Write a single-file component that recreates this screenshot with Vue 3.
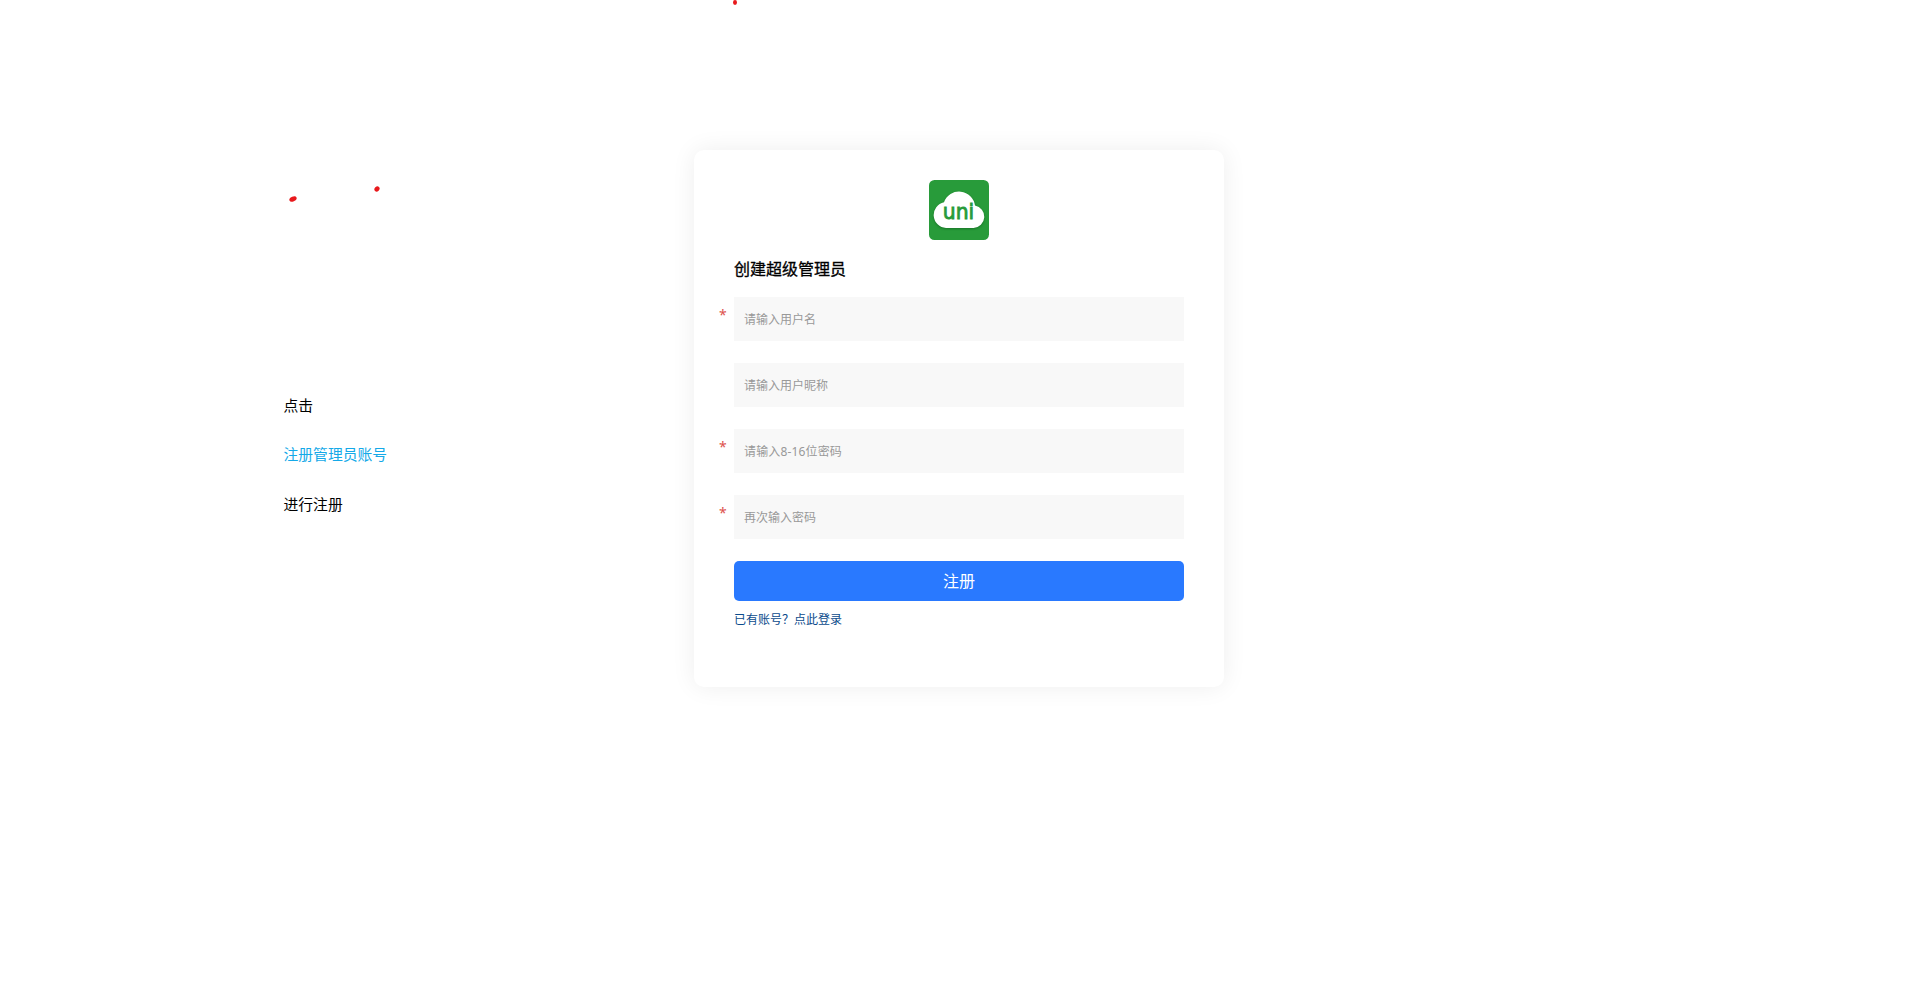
<script setup>
import { reactive } from 'vue'

const guide = [
  { text: '点击', accent: false },
  { text: '注册管理员账号', accent: true },
  { text: '进行注册', accent: false },
]

const fields = [
  { key: 'username', type: 'text', placeholder: '请输入用户名', required: true },
  { key: 'nickname', type: 'text', placeholder: '请输入用户昵称', required: false },
  { key: 'password', type: 'password', placeholder: '请输入8-16位密码', required: true },
  { key: 'confirm', type: 'password', placeholder: '再次输入密码', required: true },
]

const form = reactive({ username: '', nickname: '', password: '', confirm: '' })
</script>

<template>
  <div class="page">
    <svg class="mark mark-top" width="4" height="5" viewBox="0 0 4 5">
      <ellipse cx="2" cy="2.5" rx="2" ry="2.4" />
    </svg>
    <svg class="mark mark-left" width="8" height="6" viewBox="0 0 8 6">
      <ellipse cx="4" cy="3" rx="3.8" ry="2.4" transform="rotate(-22 4 3)" />
    </svg>
    <svg class="mark mark-right" width="6" height="6" viewBox="0 0 6 6">
      <ellipse cx="3" cy="3" rx="2.8" ry="2.3" transform="rotate(-45 3 3)" />
    </svg>

    <aside class="guide">
      <p v-for="line in guide" :key="line.text" :class="{ accent: line.accent }">{{ line.text }}</p>
    </aside>

    <main class="card">
      <svg class="logo" width="60" height="60" viewBox="0 0 60 60">
        <rect width="60" height="60" rx="5.5" fill="#289b3a" />
        <g class="cloud">
          <path d="M17 48A13 13 0 0 1 15 22.3A16 16 0 0 1 46 25.6A11.3 11.3 0 0 1 44.5 48Z" fill="#fff" />
        </g>
        <text class="wordmark" x="13.8" y="38.8" textLength="31.4" lengthAdjust="spacingAndGlyphs">uni</text>
      </svg>
      <h1>创建超级管理员</h1>
      <form @submit.prevent>
        <div v-for="field in fields" :key="field.key" class="field">
          <span v-if="field.required" class="star">*</span>
          <input
            v-model="form[field.key]"
            :class="field.key"
            :type="field.type"
            :placeholder="field.placeholder"
          />
        </div>
        <button type="submit">注册</button>
      </form>
      <a class="login">已有账号？点此登录</a>
    </main>
  </div>
</template>

<style>
body {
  background: #fff;
}
</style>

<style scoped>
.page {
  position: relative;
  box-sizing: border-box;
  display: grid;
  grid-template-columns: 410px 530px;
  align-items: start;
  height: 993px;
  padding: 150px 0 0 284px;
  overflow: hidden;
  font-family: "Noto Sans", "Noto Sans CJK SC", sans-serif;
  color: #000;
}

.mark {
  position: absolute;
  fill: #e8191c;
}

.mark-top {
  left: 733px;
  top: 0;
}

.mark-left {
  left: 288.5px;
  top: 196px;
}

.mark-right {
  left: 373.5px;
  top: 186px;
}

.guide {
  padding-top: 230px;
  font-family: "Noto Sans CJK SC", sans-serif;
  font-size: 14.8px;
  line-height: 49.4px;
}

.guide p {
  margin: 0 0 0 -0.5px;
}

.guide .accent {
  color: #14a9e8;
}

.card {
  box-sizing: border-box;
  height: 537px;
  padding: 30px 40px;
  border-radius: 10px;
  background: #fff;
  box-shadow: 0 0 25px rgba(0, 0, 0, 0.07);
}

.logo {
  display: block;
  margin: 0 auto;
}

.cloud {
  filter: drop-shadow(0 1px 1px rgba(0, 60, 10, 0.4));
}

.wordmark {
  font: 22px "DejaVu Sans", sans-serif;
  fill: #289b3a;
  stroke: #289b3a;
  stroke-width: 0.9px;
}

h1 {
  margin: 17px 0 15px;
  font-size: 16px;
  font-weight: 400;
  line-height: 25px;
  -webkit-text-stroke: 0.3px #000;
}

.field {
  position: relative;
  height: 44px;
  margin-bottom: 22px;
}

.star {
  position: absolute;
  left: -15px;
  top: 6px;
  color: #dd524d;
  font-size: 14px;
  line-height: 24px;
}

input {
  box-sizing: border-box;
  display: block;
  width: 100%;
  height: 44px;
  padding: 0 10px;
  border: 0;
  outline: 0;
  background: #f8f8f8;
  font: 12px "Noto Sans", "Noto Sans CJK SC", sans-serif;
}

input::placeholder {
  color: #999;
}

input.password {
  letter-spacing: 0.15px;
}

button {
  display: block;
  width: 100%;
  height: 40px;
  padding: 0 0 2px;
  border: 0;
  border-radius: 5px;
  background: #2979ff;
  color: #fff;
  font: 16px/38px "Noto Sans CJK SC", sans-serif;
}

.login {
  display: block;
  margin-top: 8px;
  color: #0b4b8c;
  font-family: "Noto Sans CJK SC", sans-serif;
  font-size: 12px;
  line-height: 20px;
}
</style>
